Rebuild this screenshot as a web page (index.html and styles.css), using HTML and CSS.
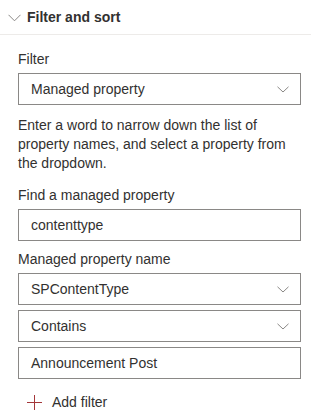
FILE: index.html
```html
<!DOCTYPE html>
<html lang="en">
<head>
  <meta charset="UTF-8">
  <meta name="viewport" content="width=device-width, initial-scale=1.0">
  <title>Filter and sort</title>
  <link rel="stylesheet" href="styles.css">
</head>
<body>
  <div class="group-header">
    <svg class="group-chevron" width="13" height="8" viewBox="0 0 13 8">
      <path d="M0.5 0.8 L6.5 6.8 L12.5 0.8" fill="none" stroke="#8a8886" stroke-width="1"/>
    </svg>
    <span>Filter and sort</span>
  </div>

  <div class="group-body">
    <label class="field-label first">Filter</label>
    <div class="box dropdown">
      <span>Managed property</span>
      <svg class="caret" width="12" height="7" viewBox="0 0 12 7"><path d="M0.5 0.8 L6 6 L11.5 0.8" fill="none" stroke="#8a8886" stroke-width="1"/></svg>
    </div>

    <p class="description">Enter a word to narrow down the list of property names, and select a property from the dropdown.</p>

    <label class="field-label">Find a managed property</label>
    <div class="box">contenttype</div>

    <label class="field-label second">Managed property name</label>
    <div class="box dropdown">
      <span>SPContentType</span>
      <svg class="caret" width="12" height="7" viewBox="0 0 12 7"><path d="M0.5 0.8 L6 6 L11.5 0.8" fill="none" stroke="#8a8886" stroke-width="1"/></svg>
    </div>
    <div class="box dropdown stacked">
      <span>Contains</span>
      <svg class="caret" width="12" height="7" viewBox="0 0 12 7"><path d="M0.5 0.8 L6 6 L11.5 0.8" fill="none" stroke="#8a8886" stroke-width="1"/></svg>
    </div>
    <div class="box stacked">Announcement Post</div>

    <div class="add-filter">
      <svg width="15" height="15" viewBox="0 0 15 15">
        <path d="M7.5 0 V15 M0 7.5 H15" stroke="#a4373a" stroke-width="1"/>
      </svg>
      <span>Add filter</span>
    </div>
  </div>
</body>
</html>
```

FILE: styles.css
```css
body {
  margin: 0;
  font-family: "Liberation Sans", Arial, sans-serif;
  font-size: 14px;
  color: #323130;
  background: #fff;
}
.group-header {
  display: flex;
  align-items: center;
  height: 34px;
  padding-left: 8px;
  border-bottom: 1px solid #edebe9;
  font-weight: bold;
  line-height: 20px;
}
.group-chevron {
  margin-right: 6px;
  margin-top: 1px;
}
.group-body {
  padding: 0 10px 0 18px;
}
.field-label {
  display: block;
  line-height: 20px;
  margin-top: 12px;
  margin-bottom: 4px;
}
.field-label.first {
  margin-top: 14px;
}
.field-label.second {
  margin-top: 8px;
}
.box {
  box-sizing: border-box;
  height: 32px;
  border: 1px solid #8a8886;
  padding: 0 11px 0 12px;
  line-height: 30px;
  white-space: nowrap;
}
.box.stacked {
  margin-top: 5px;
}
.dropdown {
  display: flex;
  align-items: center;
  justify-content: space-between;
}
.caret {
  display: block;
}
.description {
  margin: 11px 0 0;
  line-height: 19px;
}
.add-filter {
  display: flex;
  align-items: center;
  gap: 10px;
  margin-top: 13px;
  padding-left: 9px;
  line-height: 20px;
}
.add-filter svg {
  display: block;
}
```
